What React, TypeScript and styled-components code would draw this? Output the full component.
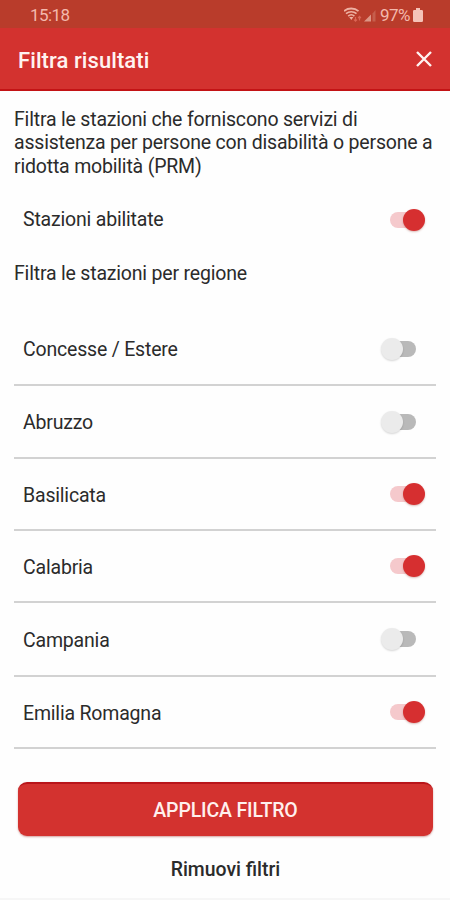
import React, { useState } from "react";
import styled, { createGlobalStyle } from "styled-components";

const GlobalStyle = createGlobalStyle`
  * { box-sizing: border-box; }
  body {
    margin: 0;
    background: #fefefe;
    font-family: Roboto, "Liberation Sans", sans-serif;
  }
  button { font-family: inherit; border: 0; padding: 0; cursor: pointer; }
`;

const Screen = styled.div`
  display: flex;
  flex-direction: column;
  width: 450px;
  height: 900px;
  overflow: hidden;
  background: #fefefe;
  color: #2b2b2b;
`;

const StatusBar = styled.div`
  display: flex;
  flex: none;
  align-items: center;
  justify-content: space-between;
  height: 28px;
  padding: 2px 27px 0 30px;
  background: #b93c2b;
  color: #f3b9ad;
  font-size: 17px;
  line-height: 24px;
`;

const Clock = styled.span`
  letter-spacing: -0.6px;
`;

const StatusIcons = styled.div`
  display: flex;
  align-items: center;
`;

const Battery = styled.span`
  margin: 0 3px 0 4px;
  font-size: 17px;
  letter-spacing: -0.5px;
`;

const Header = styled.header`
  display: flex;
  flex: none;
  align-items: center;
  justify-content: space-between;
  height: 63px;
  padding: 0 17px 0 18px;
  background: #d3322f;
  border-bottom: 2px solid #c31315;
  color: #fff3f1;
`;

const Title = styled.h1`
  margin: 4px 0 0;
  font-size: 22px;
  line-height: 28px;
  font-weight: 500;
  letter-spacing: 0.08px;
`;

const CloseButton = styled.button`
  display: flex;
  background: none;
  color: inherit;
`;

const Content = styled.main`
  display: flex;
  flex-direction: column;
  padding: 17px 14px 0;
`;

const Intro = styled.p`
  margin: 0;
  font-size: 19.5px;
  line-height: 23.3px;
  letter-spacing: -0.19px;
  white-space: nowrap;
`;

const Row = styled.div<{ $divided?: boolean; $height: number }>`
  display: flex;
  flex: none;
  align-items: center;
  justify-content: space-between;
  height: ${(p) => p.$height}px;
  padding: 0 11px 0 9px;
  border-bottom: ${(p) => (p.$divided ? "2px solid #d2d2d2" : "0")};
`;

const RowLabel = styled.span<{ $lowered?: boolean }>`
  padding-top: ${(p) => (p.$lowered ? 3 : 1)}px;
  font-size: 19.5px;
  line-height: 24px;
  letter-spacing: -0.19px;
`;

const RegionList = styled.div`
  display: flex;
  flex-direction: column;
  margin-top: 28px;
`;

const Track = styled.button<{ $on: boolean }>`
  display: flex;
  align-items: center;
  justify-content: ${(p) => (p.$on ? "flex-end" : "flex-start")};
  width: 26px;
  height: 16px;
  margin-right: 9px;
  border-radius: 8px;
  background: ${(p) => (p.$on ? "#f5c9cc" : "#b9b9b9")};
`;

const Thumb = styled.span<{ $on: boolean }>`
  flex: none;
  width: 22px;
  height: 22px;
  margin: ${(p) => (p.$on ? "0 -9px 0 0" : "0 0 0 -9px")};
  border-radius: 50%;
  background: ${(p) => (p.$on ? "#d62f30" : "#ebebeb")};
  box-shadow: 0 1px 2px ${(p) => (p.$on ? "rgba(150, 60, 50, 0.35)" : "rgba(0, 0, 0, 0.16)")};
`;

const Actions = styled.footer`
  display: flex;
  flex-direction: column;
  padding: 33px 17px 0 18px;
`;

const ApplyButton = styled.button`
  height: 54px;
  padding-top: 1px;
  border-top: 2px solid #b9151a;
  border-radius: 9px;
  background: #d3322f;
  box-shadow: 0 1px 2px rgba(160, 50, 45, 0.45);
  color: #fff0ee;
  font-size: 19.5px;
  font-weight: 500;
  letter-spacing: -0.15px;
`;

const ClearButton = styled.button`
  margin-top: 22px;
  background: none;
  color: #2b2b2b;
  font-size: 19.4px;
  line-height: 24px;
  font-weight: 500;
`;

const BottomEdge = styled.div`
  flex: none;
  height: 2px;
  margin-top: auto;
  background: #f6f6f6;
`;

function WifiIcon() {
  return (
    <svg width="20" height="16" viewBox="0 0 20 16" fill="none" stroke="#eeb1a3">
      <path d="M0 4.2C4 .6 10.5.6 14.5 4.2" strokeWidth="1.8" />
      <path d="M2 6.7C5 4.1 9.5 4.1 12.5 6.7" strokeWidth="1.7" />
      <path d="M4.2 9.1C6 7.5 8.6 7.5 10.4 9.1" strokeWidth="1.6" />
      <path d="M5.2 10h4.2L7.3 13z" fill="#eeb1a3" stroke="none" />
      <path d="M11.5 10v4M10 12.6l1.5 1.6 1.5-1.6" stroke="#dc6555" strokeWidth="1.2" />
      <path d="M15.5 13.5V9.5M14.1 11l1.4-1.6 1.4 1.6" stroke="#d86557" strokeWidth="1.2" />
    </svg>
  );
}

function SignalIcon() {
  return (
    <svg width="12" height="15" viewBox="0 0 12 15">
      <path d="M0 13.5L7 6.5v7z" fill="#dc9585" />
      <path d="M8.5 5.5L11.5 2v11.5h-3z" fill="#c65e4c" />
    </svg>
  );
}

function BatteryIcon() {
  return (
    <svg width="10" height="14" viewBox="0 0 10 14" fill="#f5c3b8">
      <path d="M3 0h4v2h1.7Q10 2 10 3.3v9.4Q10 14 8.7 14H1.3Q0 14 0 12.7V3.3Q0 2 1.3 2H3z" />
    </svg>
  );
}

function CloseIcon() {
  return (
    <svg width="18" height="18" viewBox="0 0 18 18" fill="none" stroke="currentColor" strokeWidth="2.4">
      <path d="M2 2l14 14M16 2L2 16" />
    </svg>
  );
}

interface SwitchRowProps {
  label: string;
  initial: boolean;
  height: number;
  divided?: boolean;
}

function SwitchRow({ label, initial, height, divided }: SwitchRowProps) {
  const [on, setOn] = useState(initial);
  return (
    <Row $divided={divided} $height={height}>
      <RowLabel $lowered={divided}>{label}</RowLabel>
      <Track $on={on} role="switch" aria-checked={on} aria-label={label} onClick={() => setOn(!on)}>
        <Thumb $on={on} />
      </Track>
    </Row>
  );
}

const regions = [
  { label: "Concesse / Estere", on: false, height: 73 },
  { label: "Abruzzo", on: false, height: 73 },
  { label: "Basilicata", on: true, height: 72 },
  { label: "Calabria", on: true, height: 72 },
  { label: "Campania", on: false, height: 74 },
  { label: "Emilia Romagna", on: true, height: 72 },
];

export default function App() {
  return (
    <Screen>
      <GlobalStyle />
      <StatusBar>
        <Clock>15:18</Clock>
        <StatusIcons>
          <WifiIcon />
          <SignalIcon />
          <Battery>97%</Battery>
          <BatteryIcon />
        </StatusIcons>
      </StatusBar>
      <Header>
        <Title>Filtra risultati</Title>
        <CloseButton aria-label="Chiudi">
          <CloseIcon />
        </CloseButton>
      </Header>
      <Content>
        <Intro>
          Filtra le stazioni che forniscono servizi di
          <br />
          assistenza per persone con disabilità o persone a
          <br />
          ridotta mobilità (PRM)
        </Intro>
        <SwitchRow label="Stazioni abilitate" initial height={84} />
        <Intro>Filtra le stazioni per regione</Intro>
        <RegionList>
          {regions.map((r) => (
            <SwitchRow key={r.label} label={r.label} initial={r.on} height={r.height} divided />
          ))}
        </RegionList>
      </Content>
      <Actions>
        <ApplyButton>APPLICA FILTRO</ApplyButton>
        <ClearButton>Rimuovi filtri</ClearButton>
      </Actions>
      <BottomEdge />
    </Screen>
  );
}
